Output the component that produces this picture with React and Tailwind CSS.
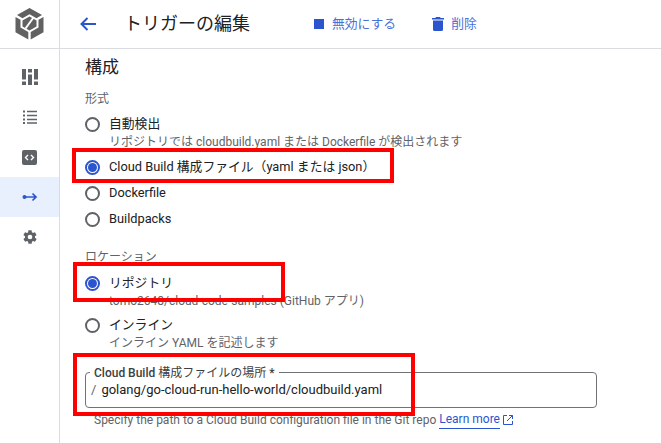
const FONT = "font-['Roboto','Noto_Sans_CJK_JP',sans-serif]";

function Radio({ checked }) {
  return checked ? (
    <span className="flex h-[15px] w-[15px] shrink-0 items-center justify-center rounded-full border-2 border-[#2b55cf]">
      <span className="h-[9px] w-[9px] rounded-full bg-[#2b55cf]" />
    </span>
  ) : (
    <span className="h-[15px] w-[15px] shrink-0 rounded-full border-2 border-[#5f6368]" />
  );
}

function Option({ label, sub, checked, className = "" }) {
  return (
    <div className={"flex flex-col " + className}>
      <div className="flex h-[18px] items-center gap-[9px]">
        <Radio checked={checked} />
        <span className="text-[12.8px] leading-[18px] text-[#202124]">{label}</span>
      </div>
      {sub && (
        <div className="pl-[24px] text-[12px] leading-[18px] text-[#5f6368]">{sub}</div>
      )}
    </div>
  );
}

function Logo() {
  return (
    <svg width="29" height="32" viewBox="0 0 29 32" fill="#616161">
      <path d="M14.500 0 27 7 21.500 10.200 14.500 6.300 7.500 10.200 2 7Z" />
      <path d="M.5 9 5.500 11.800V19.500L13.300 24V31.500L.5 24.300Z" />
      <path d="M28.500 9 23.500 11.800V19.500L15.700 24V31.500L28.500 24.300Z" />
      <path d="M14.500 8.500 21.500 12.500V18.500L14.500 22.500 7.500 18.500V12.500Z" />
      <path d="M18.500 9.500 10.500 20.500" stroke="#fff" strokeWidth="2" fill="none" />
    </svg>
  );
}

function NavIcon({ children, active }) {
  return (
    <div className={"flex h-10 w-full items-center justify-center " + (active ? "bg-[#e8f0fe]" : "")}>
      {children}
    </div>
  );
}

export default function App() {
  return (
    <div className={"flex h-[443px] w-[661px] overflow-hidden bg-white " + FONT}>
      <aside className="flex h-full w-[60px] shrink-0 flex-col border-r border-[#dadce0]">
        <div className="flex h-[49px] shrink-0 items-center justify-center border-b border-[#dadce0] pr-[1px]">
          <Logo />
        </div>
        <div className="flex flex-col pt-2">
          <NavIcon>
            <svg width="16" height="16" viewBox="0 0 16 16" fill="#5f6368">
              <path d="M0 0h4v10.500H0zM0 12.500h4V16H0zM6 0h4v3.500H6zM6 5.500h4V16H6zM12 0h4v10.500h-4zM12 12.500h4V16h-4z" />
            </svg>
          </NavIcon>
          <NavIcon>
            <svg width="14" height="14" viewBox="0 0 14 14" fill="#5f6368">
              <path d="M0 .5h2V2.500H0zM4 .75h10v1.500H4zM0 4.500h2v2H0zM4 4.750h10v1.500H4zM0 8.500h2v2H0zM4 8.750h10v1.500H4zM0 12h2v2H0zM4 12.250h10v1.500H4z" />
            </svg>
          </NavIcon>
          <NavIcon>
            <svg width="15" height="15" viewBox="0 0 15 15">
              <rect width="15" height="15" rx="2" fill="#5f6368" />
              <path d="M6 5 3.500 7.500 6 10M9 5l2.500 2.500L9 10" stroke="#fff" strokeWidth="1.400" fill="none" />
            </svg>
          </NavIcon>
          <NavIcon active>
            <svg width="16" height="10" viewBox="0 0 16 10" fill="none">
              <circle cx="2.500" cy="5" r="2" fill="#2b55cf" />
              <path d="M2 5h12M10.500 1.500 14 5l-3.500 3.500" stroke="#2b55cf" strokeWidth="1.700" />
            </svg>
          </NavIcon>
          <NavIcon>
            <svg width="16" height="16" viewBox="0 0 24 24" fill="#5f6368">
              <path d="M19.400 13c.04-.3.100-.66.100-1s-.06-.7-.1-1l2.100-1.650c.2-.15.240-.42.120-.64l-2-3.460c-.12-.22-.4-.3-.6-.22l-2.500 1c-.52-.4-1.080-.73-1.700-.98l-.37-2.650A.5.500 0 0 0 14 2h-4a.5.500 0 0 0-.5.420l-.37 2.650c-.62.250-1.180.6-1.700.98l-2.500-1a.5.500 0 0 0-.6.220l-2 3.460c-.13.220-.07.490.12.640L4.600 11c-.04.320-.1.660-.1 1s.06.680.1 1l-2.100 1.650c-.2.150-.25.420-.12.640l2 3.460c.12.220.38.300.6.220l2.500-1c.52.400 1.080.730 1.700.980l.37 2.650c.04.240.25.420.5.420h4c.25 0 .46-.18.500-.42l.37-2.650c.62-.25 1.180-.58 1.700-.98l2.500 1c.22.080.48 0 .6-.22l2-3.460c.12-.22.070-.49-.12-.64zM12 15.500a3.500 3.500 0 1 1 0-7 3.500 3.500 0 0 1 0 7z" />
            </svg>
          </NavIcon>
        </div>
      </aside>

      <main className="relative min-w-0 flex-1">
        <header className="flex h-[49px] items-center border-b border-[#dadce0] pb-[1px] pl-[20px]">
          <svg width="16" height="14" viewBox="0 0 16 14" fill="none">
            <path d="M16 7H1.500M7.500 1 1.500 7l6 6" stroke="#2b55cf" strokeWidth="2" />
          </svg>
          <h1 className="ml-[28px] text-[18px] font-normal leading-6 text-[#202124]">トリガーの編集</h1>
          <div className="ml-[64px] flex items-center gap-[8px]">
            <span className="h-[10px] w-[10px] bg-[#2b55cf]" />
            <span className="text-[12.800px] text-[#4a6fd8]">無効にする</span>
          </div>
          <div className="ml-[36px] flex items-center gap-[7px]">
            <svg width="12" height="14" viewBox="0 0 12 14" fill="#2b55cf">
              <path d="M4 0h4l.7 1H12v1.500H0V1h3.300zM1 3.500h10V12.500A1.500 1.500 0 0 1 9.500 14h-7A1.500 1.500 0 0 1 1 12.500z" />
            </svg>
            <span className="text-[12.800px] text-[#4a6fd8]">削除</span>
          </div>
        </header>

        <div className="pl-[25px] pr-[65px]">
          <h2 className="mt-[6px] text-[17px] font-normal leading-6 text-[#202124]">構成</h2>
          <div className="mt-[11px] text-[12px] leading-[18px] text-[#5f6368]">形式</div>

          <Option className="mt-[7px]" label="自動検出" sub="リポジトリでは cloudbuild.yaml または Dockerfile が検出されます" />
          <Option className="mt-[7px]" checked label="Cloud Build 構成ファイル（yaml または json）" />
          <Option className="mt-[8px]" label="Dockerfile" />
          <Option className="mt-[8px]" label="Buildpacks" />

          <div className="mt-[20px] text-[12px] leading-[18px] text-[#5f6368]">ロケーション</div>

          <Option className="mt-[8px]" checked label="リポジトリ" sub="tomo2648/cloud-code-samples (GitHub アプリ)" />
          <Option className="mt-[6px]" label="インライン" sub="インライン YAML を記述します" />

          <div className="relative mt-[20px] flex h-[36px] w-[512px] items-center rounded border border-[#6f7276] pl-[5px]">
            <span className="absolute -top-[7px] left-[4px] bg-white px-[4px] text-[12px] leading-[14px] text-[#3c4043]">
              <span className="font-medium">Cloud Build</span> 構成ファイルの場所 <span className="font-medium">*</span>
            </span>
            <span className="mr-[5px] text-[13px] text-[#5f6368]">/</span>
            <span className="text-[13px] text-[#202124]">golang/go-cloud-run-hello-world/cloudbuild.yaml</span>
          </div>

          <div className="mt-[2px] flex items-center pl-[9px] text-[12px] leading-[18px] text-[#5f6368]">
            <span>Specify the path to a Cloud Build configuration file in the Git repo</span>
            <span className="ml-[3px] border-b border-[#2b55cf] text-[#2b55cf]">Learn more</span>
            <svg className="ml-[3px]" width="10" height="10" viewBox="0 0 10 10" fill="none" stroke="#2b55cf" strokeWidth="1">
              <path d="M4 .5H.5v9h9V6M6 .5h3.500V4M9.500 .5 4 6" />
            </svg>
          </div>
        </div>

        <div className="absolute left-[12px] top-[148px] h-[35px] w-[322px] border-4 border-[#ff0000]" />
        <div className="absolute left-[13px] top-[262px] h-[40px] w-[212px] border-4 border-[#ff0000]" />
        <div className="absolute left-[13px] top-[353px] h-[63px] w-[342px] border-4 border-[#ff0000]" />
      </main>
    </div>
  );
}
